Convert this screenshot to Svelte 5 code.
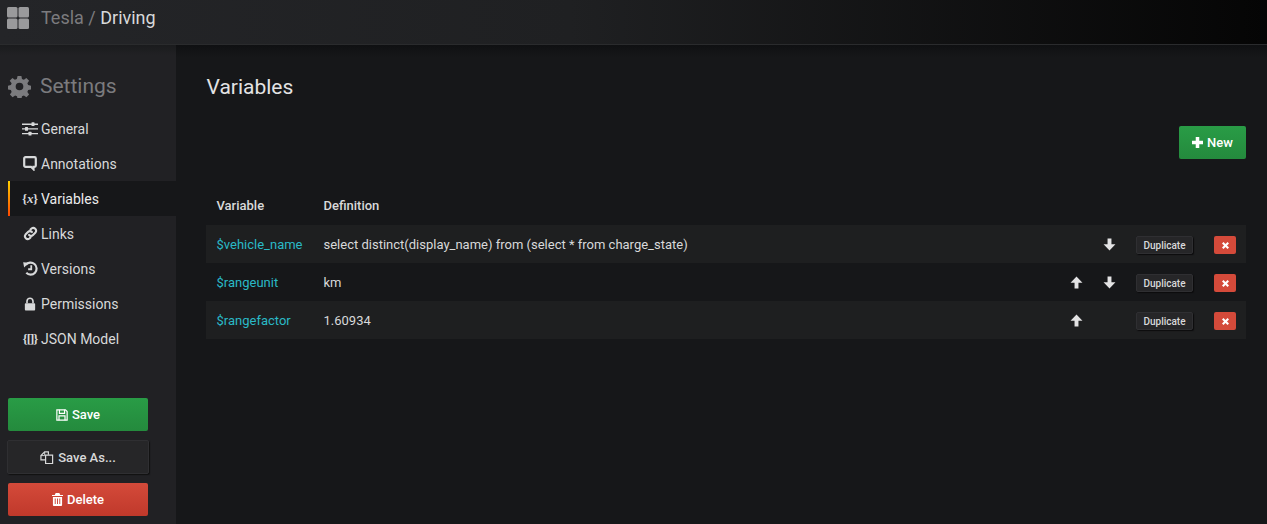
<script>
  const nav = [
    { label: 'General', icon: 'sliders' },
    { label: 'Annotations', icon: 'comment' },
    { label: 'Variables', icon: 'vars', active: true },
    { label: 'Links', icon: 'link' },
    { label: 'Versions', icon: 'history' },
    { label: 'Permissions', icon: 'lock' },
    { label: 'JSON Model', icon: 'json' },
  ];
  const rows = [
    { name: '$vehicle_name', def: 'select distinct(display_name) from (select * from charge_state)', up: false, down: true },
    { name: '$rangeunit', def: 'km', up: true, down: true },
    { name: '$rangefactor', def: '1.60934', up: true, down: false },
  ];
</script>

{#snippet arrow(up)}
  <svg class="arrow" class:flip={up} viewBox="0 0 12 12" width="13" height="13">
    <path d="M4.200 .5h3.600v5.300h3.700L6 11.500 .5 5.800h3.700z" fill="currentColor" />
  </svg>
{/snippet}

<div class="page">
  <header class="topbar">
    <svg class="grid-icon" viewBox="0 0 22 22" width="22" height="22">
      <rect x="0" y="0" width="10.500" height="10.500" rx="1.500" />
      <rect x="11.500" y="0" width="10.500" height="10.500" rx="1.500" />
      <rect x="0" y="11.500" width="10.500" height="10.500" rx="1.500" />
      <rect x="11.500" y="11.500" width="10.500" height="10.500" rx="1.500" />
    </svg>
    <div class="crumb"><span class="dim">Tesla /&nbsp;</span><span class="cur">Driving</span></div>
  </header>

  <div class="body">
    <aside class="side">
      <div class="side-title">
        <svg viewBox="0 0 24 24" width="23" height="23">
          <path fill="#7b7b7e" fill-rule="evenodd" d="M10 1h4l.6 3.100 2 .8 2.600-1.800 2.800 2.800-1.800 2.600.8 2 3 .6v4l-3 .6-.8 2 1.800 2.600-2.800 2.800-2.600-1.800-2 .8-.6 3.100h-4l-.6-3.100-2-.8-2.600 1.800-2.800-2.800 1.800-2.600-.8-2-3-.6v-4l3-.6.8-2L1.800 5.900l2.800-2.800 2.600 1.800 2-.8zM12 8a4 4 0 1 0 0 8 4 4 0 0 0 0-8z" />
        </svg>
        <span>Settings</span>
      </div>

      <nav class="nav">
        {#each nav as item}
          <div class="nav-item" class:active={item.active}>
            <span class="nav-icon">
              {#if item.icon === 'sliders'}
                <svg viewBox="0 0 16 14" width="16" height="14" fill="#d8d9da">
                  <path d="M0 1.600h16v1.300H0zM0 6.300h16v1.300H0zM0 11h16v1.300H0z" />
                  <rect x="9.500" y="0.300" width="3" height="3.800" rx=".5" />
                  <rect x="3" y="5" width="3" height="3.800" rx=".5" />
                  <rect x="6.500" y="9.800" width="3" height="3.800" rx=".5" />
                </svg>
              {:else if item.icon === 'comment'}
                <svg viewBox="0 0 14 15" width="14" height="15">
                  <path d="M2.500 1.200h9a1.300 1.300 0 0 1 1.300 1.300v7a1.300 1.300 0 0 1-1.300 1.300H10.500v2.400L8 10.800H2.500a1.300 1.300 0 0 1-1.300-1.300V2.500a1.300 1.300 0 0 1 1.300-1.300z" fill="none" stroke="#d8d9da" stroke-width="2.200" />
                </svg>
              {:else if item.icon === 'vars'}
                <span class="glyph">{'{'}<i>x</i>{'}'}</span>
              {:else if item.icon === 'link'}
                <svg viewBox="0 0 16 16" width="15" height="15" fill="none" stroke="#d8d9da" stroke-width="2.200" stroke-linecap="round">
                  <path d="M6.500 9.500a3 3 0 0 0 4.200 0l2.600-2.600a3 3 0 0 0-4.200-4.200L8 3.800" />
                  <path d="M9.500 6.500a3 3 0 0 0-4.200 0L2.700 9.100a3 3 0 0 0 4.200 4.200L8 12.200" />
                </svg>
              {:else if item.icon === 'history'}
                <svg viewBox="0 0 16 16" width="15" height="15" fill="none" stroke="#d8d9da" stroke-width="2.300">
                  <path d="M3 4.200A6.400 6.400 0 1 1 3.500 12.500" />
                  <path d="M.2 1.400 6.200 1.800 1.200 6.800z" fill="#d8d9da" stroke="none" />
                  <path d="M8.800 4.500v4.300H5.500" stroke-width="1.900" />
                </svg>
              {:else if item.icon === 'lock'}
                <svg viewBox="0 0 14 16" width="12" height="14">
                  <path d="M3.500 7V4.800a3.500 3.500 0 0 1 7 0V7" fill="none" stroke="#d8d9da" stroke-width="1.900" />
                  <rect x="1" y="7" width="12" height="8.500" rx="1" fill="#d8d9da" />
                </svg>
              {:else}
                <span class="glyph json">{'{[]}'}</span>
              {/if}
            </span>
            <span>{item.label}</span>
          </div>
        {/each}
      </nav>

      <div class="side-actions">
        <button class="btn green wide">
          <svg viewBox="0 0 14 14" width="12" height="12" fill="none" stroke="#fff" stroke-width="1.400">
            <path d="M1 1h10l2 2v10H1z" /><path d="M4 1v4h6V1M3.500 13V8h7v5" />
          </svg>
          Save
        </button>
        <button class="btn dark wide tall">
          <svg viewBox="0 0 15 15" width="14" height="14" fill="none" stroke="#d8d9da" stroke-width="1.300">
            <path d="M5.500 10.500H1V6l4-4h4v3" /><path d="M6 5.500h7.500v9H6z" />
            <path d="M5 2v4H1" stroke-width="1" />
          </svg>
          Save As...
        </button>
        <button class="btn red wide">
          <svg viewBox="0 0 12 14" width="11" height="13" fill="#fff">
            <path d="M4 0h4l1 2h3v1.300H0V2h3zM1 4.300h10V13a1 1 0 0 1-1 1H2a1 1 0 0 1-1-1zM3 6v6h1V6zm2.500 0v6h1V6zM8 6v6h1V6z" fill-rule="evenodd" />
          </svg>
          Delete
        </button>
      </div>
    </aside>

    <main class="main">
      <h2>Variables</h2>
      <div class="toolbar">
        <button class="btn green new">
          <svg viewBox="0 0 10 10" width="11" height="11"><path d="M3.400 0h3.200v3.400H10v3.200H6.600V10H3.400V6.600H0V3.400h3.400z" fill="#fff" /></svg>
          New
        </button>
      </div>

      <div class="table">
        <div class="thead">
          <span class="c-name">Variable</span>
          <span class="c-def">Definition</span>
        </div>
        {#each rows as row}
          <div class="row">
            <span class="c-name link">{row.name}</span>
            <span class="c-def">{row.def}</span>
            <span class="c-arrow">{#if row.up}{@render arrow(true)}{/if}</span>
            <span class="c-arrow">{#if row.down}{@render arrow(false)}{/if}</span>
            <button class="dup">Duplicate</button>
            <button class="del" aria-label="Remove">
              <svg viewBox="0 0 8 8" width="7" height="7"><path d="M1.700 0 4 2.300 6.300 0 8 1.700 5.700 4 8 6.300 6.300 8 4 5.700 1.700 8 0 6.300 2.300 4 0 1.700z" fill="#fff" /></svg>
            </button>
          </div>
        {/each}
      </div>
    </main>
  </div>
</div>

<style>
  :global(body) {
    background: #161719;
    overflow: hidden;
  }
  .page {
    width: 1267px;
    height: 524px;
    display: flex;
    flex-direction: column;
    font-family: Roboto, 'Liberation Sans', sans-serif;
    font-size: 13px;
    color: #d8d9da;
  }
  .topbar {
    height: 45px;
    flex: none;
    display: flex;
    align-items: center;
    gap: 12px;
    padding: 0 0 8px 7px;
    box-sizing: border-box;
    background: linear-gradient(90deg, #242528 0%, #1f2022 45%, #050505 100%);
    border-bottom: 1px solid #2a2b2d;
  }
  .grid-icon {
    fill: #9a9a9c;
    flex: none;
  }
  .crumb {
    font-size: 18px;
    line-height: 22px;
  }
  .dim {
    color: #7b7b7e;
  }
  .cur {
    color: #d8d9da;
  }
  .body {
    flex: 1;
    display: flex;
    min-height: 0;
  }
  .side {
    width: 176px;
    flex: none;
    background: linear-gradient(180deg, #1a1b1d 0, #212124 10px);
    padding-top: 27px;
    box-sizing: border-box;
  }
  .side-title {
    display: flex;
    align-items: center;
    gap: 9px;
    height: 28px;
    padding-left: 8px;
    font-size: 21px;
    color: #7b7b7e;
  }
  .nav {
    margin-top: 11px;
  }
  .nav-item {
    height: 35px;
    display: flex;
    align-items: center;
    margin-left: 8px;
    padding-left: 14px;
    gap: 3px;
    font-size: 14px;
    color: #d8d9da;
  }
  .nav-item.active {
    background: #161719;
    color: #ececec;
    border-left: 2px solid transparent;
    padding-left: 12px;
    border-image: linear-gradient(180deg, #ffd500, #ff4400) 1;
  }
  .nav-icon {
    width: 16px;
    display: flex;
    justify-content: center;
    align-items: center;
  }
  .glyph {
    font-family: 'Liberation Serif', serif;
    font-size: 13px;
    font-weight: 700;
    letter-spacing: -0.3px;
    white-space: nowrap;
    color: #d8d9da;
  }
  .glyph.json {
    font-size: 13px;
    letter-spacing: -1px;
  }
  .side-actions {
    margin-top: 42px;
    padding-left: 8px;
    display: flex;
    flex-direction: column;
    gap: 9px;
  }
  .btn {
    border: 0;
    border-radius: 2px;
    display: inline-flex;
    align-items: center;
    justify-content: center;
    gap: 4px;
    font-family: inherit;
    font-size: 13px;
    font-weight: 500;
    padding: 0;
  }
  .wide {
    width: 140px;
    height: 33px;
  }
  .tall {
    width: 142px;
    height: 34px;
    margin-left: -1px;
  }
  .green {
    color: #fff;
    background: linear-gradient(180deg, #299c46, #248a3d);
  }
  .dark {
    color: #d8d9da;
    background: #262628;
    border: 1px solid #2f2f32;
    box-sizing: border-box;
    box-shadow: 1px 1px 1px #111;
  }
  .red {
    color: #fff;
    background: linear-gradient(180deg, #d44a3a, #c0392b);
  }
  .main {
    flex: 1;
    padding: 30px 21px 0 30px;
    background: linear-gradient(180deg, #0f1012 0, #161719 12px);
  }
  h2 {
    margin: 0;
    padding-left: 0.5px;
    font-size: 21px;
    font-weight: 400;
    line-height: 24px;
    color: #e3e3e4;
  }
  .toolbar {
    display: flex;
    justify-content: flex-end;
    margin-top: 27px;
  }
  .new {
    width: 67px;
    height: 33px;
  }
  .table {
    margin-top: 25px;
  }
  .thead,
  .row {
    display: flex;
    align-items: center;
  }
  .thead {
    height: 41px;
    font-weight: 500;
    color: #d8d9da;
    font-size: 13px;
    padding-top: 2px;
    box-sizing: border-box;
  }
  .row {
    height: 38px;
    font-size: 13px;
  }
  .row:nth-child(even) {
    background: #1e1f20;
  }
  .c-name {
    width: 107px;
    padding-left: 10.5px;
    flex: none;
  }
  .link {
    color: #2ab9c6;
  }
  .c-def {
    flex: 1;
  }
  .c-arrow {
    width: 33px;
    flex: none;
    display: flex;
    justify-content: center;
    color: #e3e3e4;
  }
  .flip {
    transform: rotate(180deg);
  }
  .dup {
    width: 57px;
    height: 18px;
    margin: 2px 0 0 10px;
    padding: 0;
    border: 1px solid #2f2f32;
    border-radius: 2px;
    background: #262628;
    color: #d8d9da;
    font-family: inherit;
    font-size: 10px;
    font-weight: 500;
    box-shadow: 1px 1px 1px #0c0c0d;
  }
  .del {
    width: 22px;
    height: 18px;
    margin: 2px 10px 0 21px;
    padding: 0;
    border: 0;
    border-radius: 2px;
    background: #d44a3a;
    display: flex;
    align-items: center;
    justify-content: center;
  }
</style>
